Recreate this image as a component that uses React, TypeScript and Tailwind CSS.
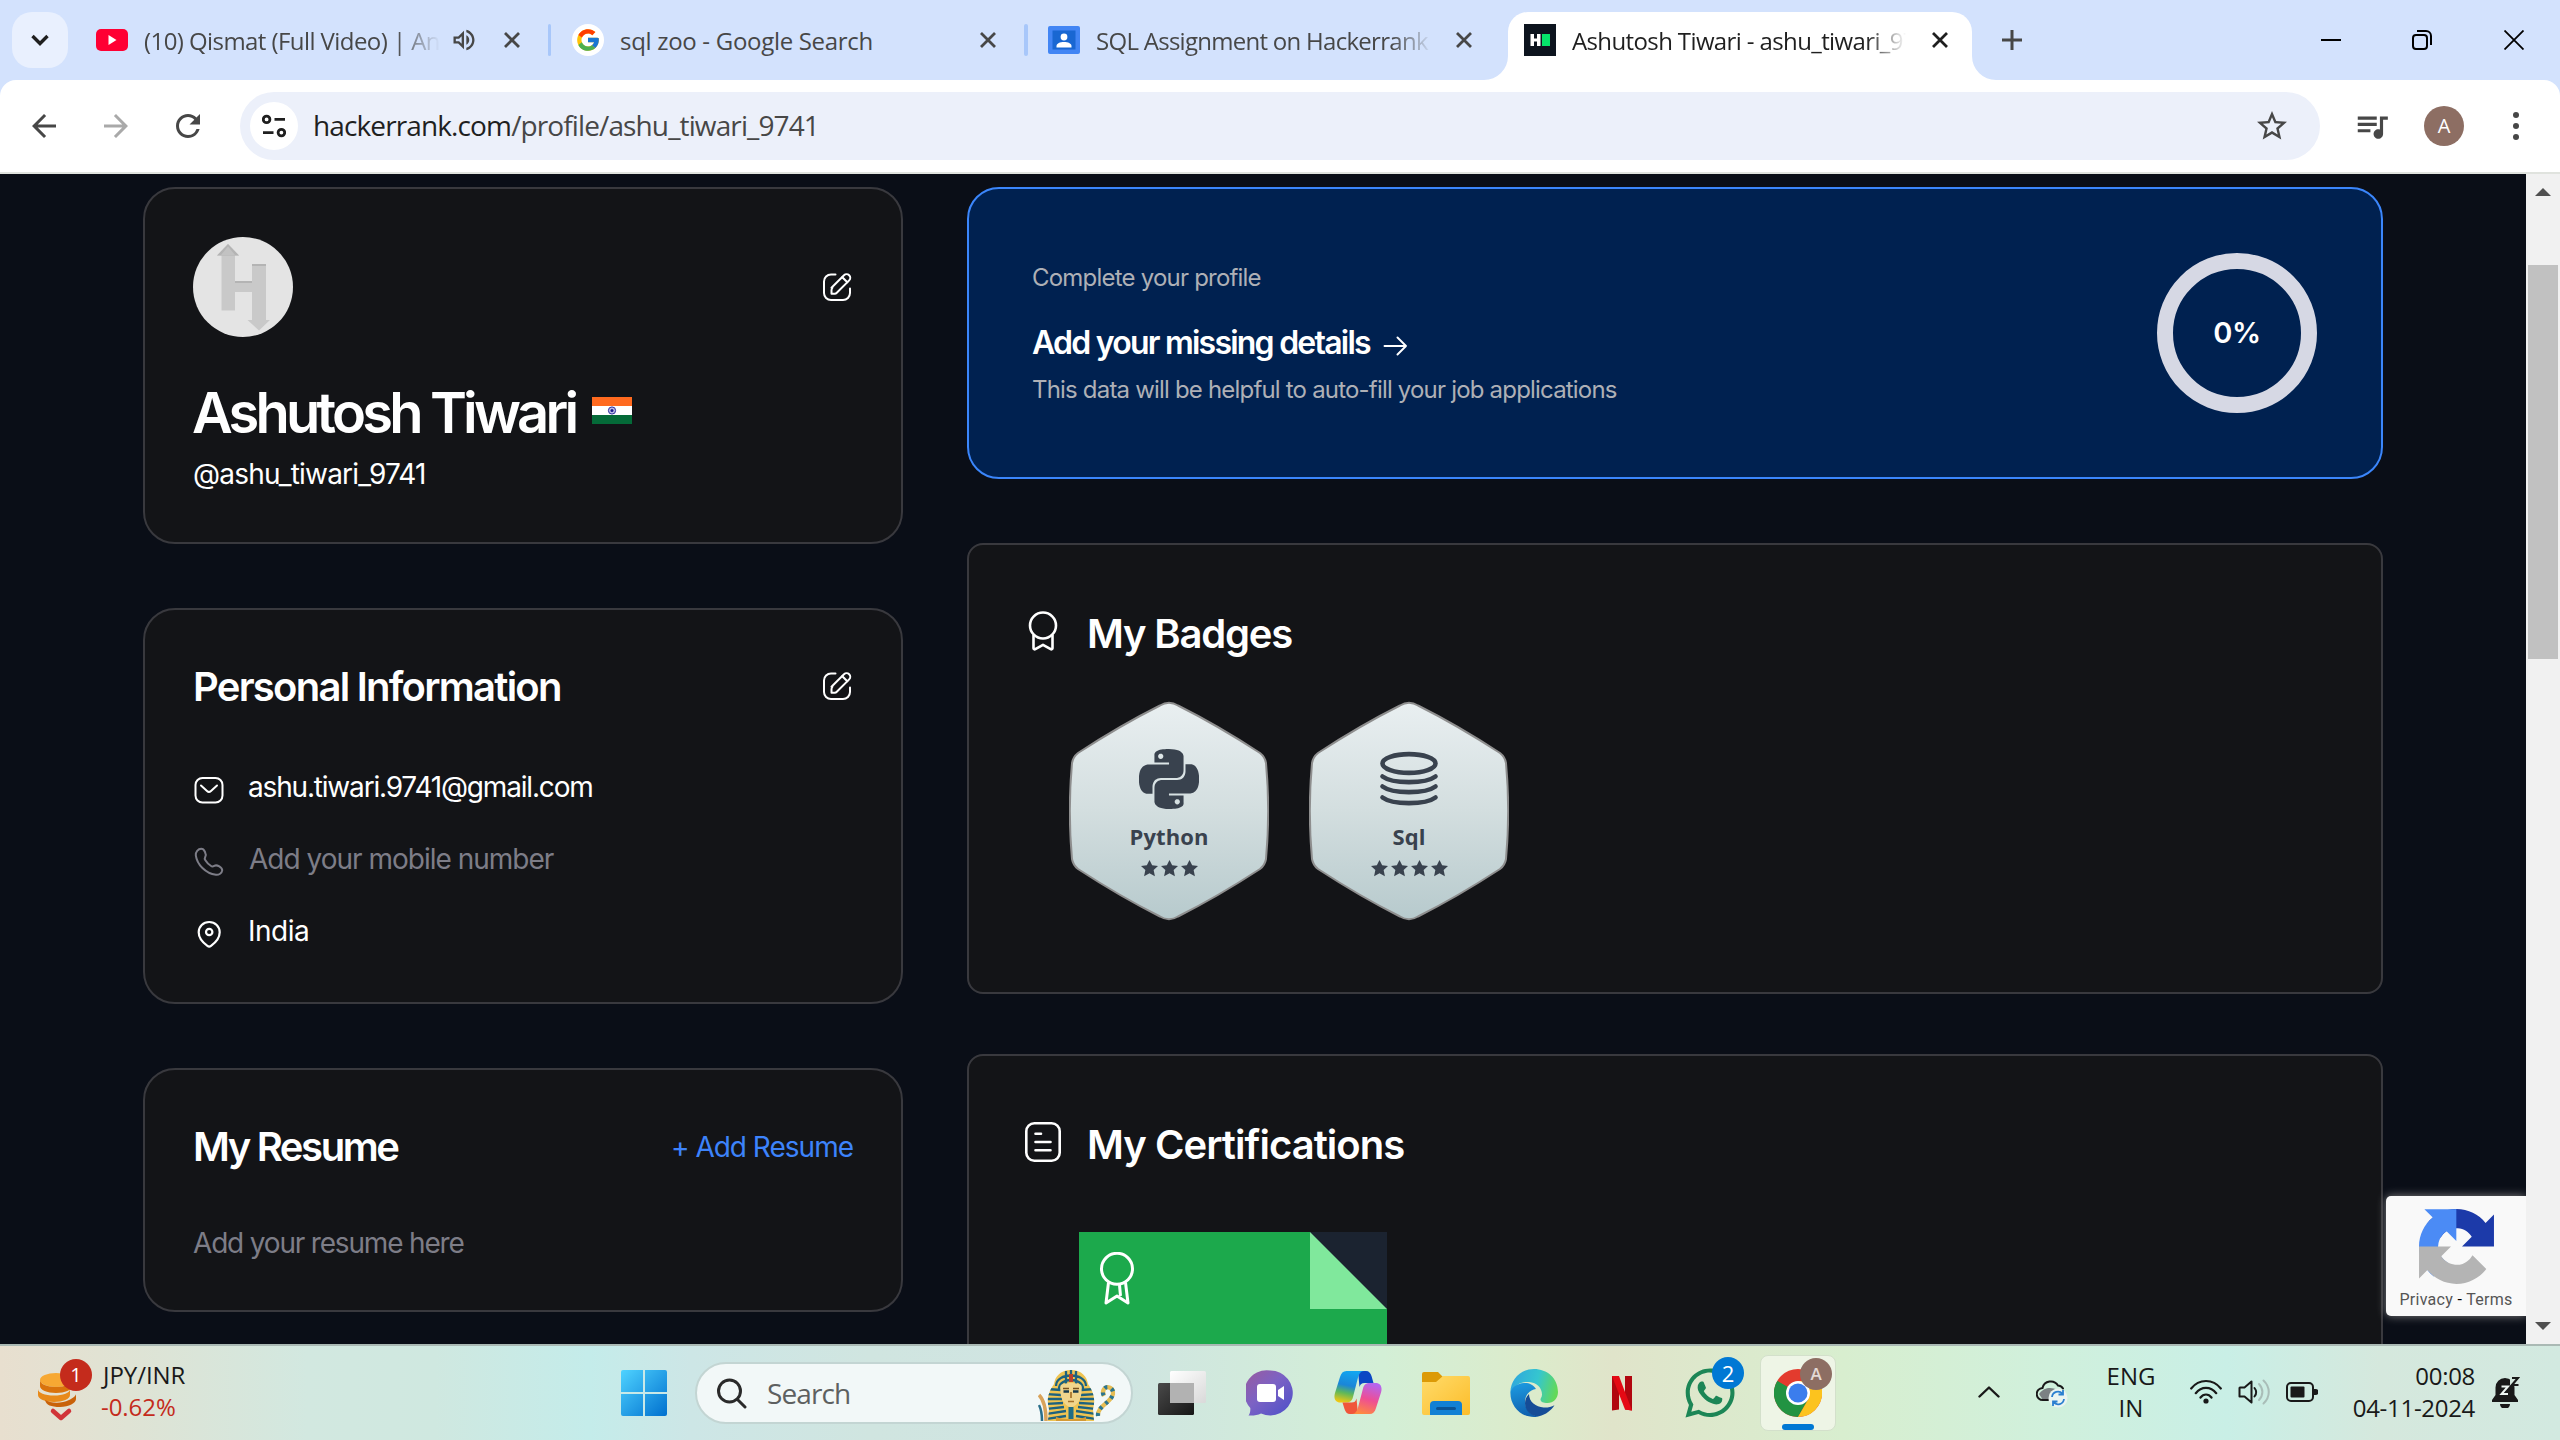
import React from "react";
import { FcGoogle } from "react-icons/fc";
import { SiPython } from "react-icons/si";
import { FaWhatsapp } from "react-icons/fa";
import { MdArrowBack, MdArrowForward, MdOutlineVolumeUp, MdQueueMusic, MdRefresh, MdStarBorder } from "react-icons/md";

/* ---------- browser chrome ---------- */

function CloseGlyph({ color = "#474747" }: { color?: string }) {
  return (
    <svg className="h-4 w-4 shrink-0" viewBox="0 0 16 16" fill="none" stroke={color} strokeWidth="2.8">
      <path d="M1 1l14 14M15 1L1 15" />
    </svg>
  );
}

function TabStrip() {
  return (
    <div className="flex h-20 items-center bg-[#d3e2fd] pr-9 pl-3 font-['Open_Sans',sans-serif] text-[24px] text-[#474747]">
      <div className="flex h-14 w-14 shrink-0 items-center justify-center rounded-[20px] bg-[#e9f0fe]">
        <svg className="h-4 w-5" viewBox="0 0 20 16" fill="none" stroke="#1f1f1f" strokeWidth="3.4">
          <path d="M2.5 4l7.5 7.5L17.500 4" />
        </svg>
      </div>

      <svg className="ml-7 h-[22px] w-8 shrink-0" viewBox="0 0 32 22">
        <rect width="32" height="22" rx="5" fill="#ff0033" />
        <path d="M12.500 6v10l8-5z" fill="#fff" />
      </svg>
      <div className="ml-4 w-[296px] shrink-0 overflow-hidden mask-r-from-85% mask-r-to-100% pt-0.5 tracking-[-0.57px] whitespace-nowrap">
        (10) Qismat (Full Video) | An
      </div>
      <MdOutlineVolumeUp className="ml-2.5 size-7 shrink-0" />
      <div className="ml-[26px]">
        <CloseGlyph />
      </div>
      <div className="ml-7 h-8 w-[3px] shrink-0 rounded bg-[#a8c7fa]" />

      <div className="ml-[21px] flex size-8 shrink-0 items-center justify-center rounded-full bg-white">
        <FcGoogle className="size-[26px]" />
      </div>
      <div className="ml-4 w-[360px] shrink-0 pt-0.5 tracking-[-0.3px] whitespace-nowrap">sql zoo - Google Search</div>
      <CloseGlyph />
      <div className="ml-7 h-8 w-1 shrink-0 rounded bg-[#a8c7fa]" />

      <svg className="ml-5 h-7 w-8 shrink-0" viewBox="0 0 32 28">
        <rect width="32" height="28" rx="2" fill="#4285f4" />
        <rect x="4.500" y="4.500" width="23" height="19" fill="#1967d2" />
        <circle cx="16" cy="11" r="3.400" fill="#fff" />
        <path d="M8.500 21.500v-1.500c0-2.500 3.500-4 7.500-4s7.500 1.500 7.500 4v1.500z" fill="#fff" />
      </svg>
      <div className="ml-4 w-[336px] shrink-0 overflow-hidden mask-r-from-88% mask-r-to-100% pt-0.5 tracking-[-0.72px] whitespace-nowrap">
        SQL Assignment on Hackerrank
      </div>
      <div className="ml-6">
        <CloseGlyph />
      </div>

      <div className="relative ml-9 flex h-[68px] w-[464px] shrink-0 items-center self-end rounded-t-[20px] bg-white pb-3 pl-4 text-[#1f1f1f]">
        <svg className="absolute bottom-0 -left-6 size-6" viewBox="0 0 24 24">
          <path d="M24 0v24H0A24 24 0 0 0 24 0z" fill="#fff" />
        </svg>
        <svg className="absolute -right-6 bottom-0 size-6" viewBox="0 0 24 24">
          <path d="M0 0v24h24A24 24 0 0 1 0 0z" fill="#fff" />
        </svg>
        <svg className="size-8 shrink-0" viewBox="0 0 32 32">
          <rect width="32" height="32" fill="#0d141e" />
          <path d="M6.500 10h3.500v4.500h3V10h3.500v12H13v-4.500h-3V22H6.500z" fill="#fff" />
          <rect x="18" y="10" width="8" height="12" fill="#05e46a" />
        </svg>
        <div className="ml-4 w-[334px] shrink-0 overflow-hidden mask-r-from-88% mask-r-to-100% pt-0.5 tracking-[-0.62px] whitespace-nowrap">
          Ashutosh Tiwari - ashu_tiwari_97
        </div>
        <div className="ml-[26px]">
          <CloseGlyph color="#1f1f1f" />
        </div>
      </div>

      <svg className="ml-[30px] size-5 shrink-0" viewBox="0 0 20 20" stroke="#474747" strokeWidth="3">
        <path d="M10 0v20M0 10h20" />
      </svg>

      <svg className="ml-auto h-5 w-5 shrink-0" viewBox="0 0 20 20" stroke="#000" strokeWidth="2">
        <path d="M0 10h20" />
      </svg>
      <svg className="ml-[71px] h-5 w-5 shrink-0" viewBox="0 0 20 20" fill="none" stroke="#000" strokeWidth="2">
        <rect x="1" y="5" width="14" height="14" rx="3" />
        <path d="M5 1h9a5 5 0 0 1 5 5v9" />
      </svg>
      <svg className="ml-[72px] h-5 w-5 shrink-0" viewBox="0 0 20 20" stroke="#000" strokeWidth="1.800">
        <path d="M.5.5l19 19M19.500.5l-19 19" />
      </svg>
    </div>
  );
}

function Toolbar() {
  return (
    <div className="bg-[#d3e2fd]">
      <div className="flex h-[94px] items-center rounded-t-[16px] border-b-2 border-[#e0e3de] bg-white pl-[26px] text-[#474747]">
        <MdArrowBack className="size-9 shrink-0" />
        <MdArrowForward className="ml-9 size-9 shrink-0 text-[#a9a9a9]" />
        <MdRefresh className="ml-9 size-9 shrink-0" />
        <div className="ml-[34px] flex h-[68px] w-[2080px] shrink-0 items-center rounded-full bg-[#ecf0fa] pr-[30px] pl-2.5">
          <div className="flex size-12 shrink-0 items-center justify-center rounded-full bg-white">
            <svg className="h-6 w-6" viewBox="0 0 24 24" fill="none" stroke="#1f1f1f" strokeWidth="2.800">
              <circle cx="4.600" cy="5.400" r="3.300" />
              <path d="M12.500 5.400H23M1 18.600h10.500" />
              <circle cx="19.400" cy="18.600" r="3.300" />
            </svg>
          </div>
          <div className="ml-[15px] pb-0.5 font-['Open_Sans',sans-serif] text-[28px] tracking-[-0.88px]">
            <span className="text-[#1f1f1f]">hackerrank.com</span>/profile/ashu_tiwari_9741
          </div>
          <MdStarBorder className="ml-auto size-9" />
        </div>
        <MdQueueMusic className="ml-[33px] size-[38px] shrink-0" />
        <div className="ml-[33px] flex size-10 shrink-0 items-center justify-center rounded-full bg-[#8d6e63] font-['Open_Sans',sans-serif] text-[20px] text-white">
          A
        </div>
        <svg className="ml-[48px] h-7 w-2 shrink-0" viewBox="0 0 8 28" fill="#474747">
          <circle cx="4" cy="3" r="3" />
          <circle cx="4" cy="14" r="3" />
          <circle cx="4" cy="25" r="3" />
        </svg>
      </div>
    </div>
  );
}

/* ---------- profile page ---------- */

function EditIcon() {
  return (
    <svg className="size-8 shrink-0" viewBox="0 0 32 32" fill="none" stroke="#fff" strokeWidth="2" strokeLinecap="round" strokeLinejoin="round">
      <path d="M14.500 3.500H10a7 7 0 0 0-7 7v11.500a7 7 0 0 0 7 7h12a7 7 0 0 0 7-7V17.500" />
      <path d="M10.500 16.800L23 4.300a3.600 3.600 0 0 1 5.200 5.100L15.800 21.800a3 3 0 0 1-2.100.9h-3.200v-3.500a3.500 3.500 0 0 1 .9-2.400z" />
      <path d="M21.300 6.200l5 5" />
    </svg>
  );
}

function MedalIcon() {
  return (
    <svg className="size-10 shrink-0" viewBox="0 0 40 40" fill="none" stroke="#fff" strokeWidth="2.600" strokeLinejoin="round">
      <circle cx="20" cy="14.500" r="13" />
      <path d="M10.500 24v13.200a1.200 1.200 0 0 0 1.800 1l7.700-4.400 7.700 4.400a1.200 1.200 0 0 0 1.800-1V24" />
    </svg>
  );
}

function DocumentIcon() {
  return (
    <svg className="size-10 shrink-0" viewBox="0 0 40 40" fill="none" stroke="#fff" strokeWidth="2.600" strokeLinecap="round">
      <rect x="3.300" y="1.300" width="33.400" height="37.400" rx="8" />
      <path d="M12.500 11.800h5.500M12.500 20h15M12.500 28.300h15" />
    </svg>
  );
}

function ProfileCard() {
  return (
    <section className="h-[357px] rounded-[32px] border-2 border-[#39393e] bg-[#131417] p-12">
      <div className="flex items-center justify-between">
        <svg className="size-[100px]" viewBox="0 0 100 100">
          <circle cx="50" cy="50" r="50" fill="#e4e4e4" />
          <path d="M35 7L46 18.500H42V44h17V27h14v56h4L66 93.500 54.500 83H59V55H42v18.500H28.500v-55H24z" fill="#c9c9c9" />
          <path d="M35 7L46 18.500H24zM59 27h14v2H59zM42 44h17v2H42z" fill="#b4b4b4" />
          <path d="M35 9.500l7 8.500H28z" fill="#c2c2c2" />
        </svg>
        <EditIcon />
      </div>
      <div className="mt-11 flex items-center">
        <h1 className="-ml-px w-[400px] text-[56px] leading-[64px] font-semibold tracking-[-3.8px] whitespace-nowrap">Ashutosh Tiwari</h1>
        <svg className="mb-1.5 h-[27px] w-10" viewBox="0 0 40 27">
          <rect width="40" height="9" fill="#ff6a1f" />
          <rect y="9" width="40" height="9" fill="#fff" />
          <rect y="18" width="40" height="9" fill="#046a38" />
          <circle cx="20" cy="13.500" r="3.600" fill="#b9b9e6" stroke="#2a2a9c" strokeWidth="1" />
          <circle cx="20" cy="13.500" r="1.500" fill="#1a1a8c" />
        </svg>
      </div>
      <p className="mt-[9px] text-[28px] leading-10 tracking-[-0.8px]">@ashu_tiwari_9741</p>
    </section>
  );
}

function PersonalInformation() {
  return (
    <section className="mt-16 h-[396px] rounded-[32px] border-2 border-[#39393e] bg-[#131417] p-12">
      <div className="flex h-14 items-center justify-between">
        <h2 className="pt-0.5 text-[40px] leading-14 font-semibold tracking-[-1.74px]">Personal Information</h2>
        <EditIcon />
      </div>
      <div className="mt-[53px] flex flex-col gap-8 text-[28px] leading-10">
        <div className="flex">
          <svg className="mt-[7px] size-8" viewBox="0 0 32 32" fill="none" stroke="#fff" strokeWidth="2" strokeLinecap="round" strokeLinejoin="round">
            <rect x="2.500" y="4" width="27" height="24.500" rx="7" />
            <path d="M8 11.500l6 5.500a3 3 0 0 0 4 0l6-5.500" />
          </svg>
          <span className="ml-[23px] tracking-[-1.18px]">ashu.tiwari.9741@gmail.com</span>
        </div>
        <div className="flex text-[#7d7d87]">
          <svg className="mt-[7px] size-8" viewBox="0 0 32 32" fill="none" stroke="currentColor" strokeWidth="2" strokeLinejoin="round">
            <path d="M8.200 2.800c1.800 0 2.900 1.200 3.700 2.900.9 1.900 1.200 3.600.4 5-.7 1.300-.8 2.200-.1 3.300 1.300 2.200 3.400 4.400 5.900 6 1 .7 2 .5 3.200-.2 1.600-.8 3.300-.4 5 .6 1.900 1.200 3.100 2.300 2.900 4.100-.3 2.500-3.200 4.700-6.300 4.300C12.600 27.300 4 18.500 2.800 9.300c-.4-3.300 2.300-6.500 5.400-6.500z" />
          </svg>
          <span className="ml-6 tracking-[-1px]">Add your mobile number</span>
        </div>
        <div className="flex">
          <svg className="mt-[7px] size-8" viewBox="0 0 32 32" fill="none" stroke="#fff" strokeWidth="2.200" strokeLinejoin="round">
            <path d="M16.200 4C10.200 4 5.700 8.500 5.700 14.300c0 5.200 3.700 10 8.700 13.600a3 3 0 0 0 3.600 0C23 24.300 26.700 19.500 26.700 14.300 26.700 8.500 22.200 4 16.200 4z" />
            <circle cx="16.200" cy="14" r="3.200" />
          </svg>
          <span className="ml-[23px] tracking-[-0.5px]">India</span>
        </div>
      </div>
    </section>
  );
}

function ResumeCard() {
  return (
    <section className="mt-16 h-[244px] rounded-[32px] border-2 border-[#39393e] bg-[#131417] p-12">
      <div className="flex h-14 items-center justify-between">
        <h2 className="pt-0.5 text-[40px] leading-14 font-semibold tracking-[-2.400px]">My Resume</h2>
        <span className="pt-0.5 text-[28px] leading-10 tracking-[-1px] text-[#3d83fb]">+ Add Resume</span>
      </div>
      <p className="mt-[49px] text-[28px] leading-10 tracking-[-1.18px] text-[#7d7d87]">Add your resume here</p>
    </section>
  );
}

function CompleteProfileCard() {
  return (
    <section className="flex h-[292px] justify-between rounded-[32px] border-2 border-[#3b86fb] bg-[#002150] px-16">
      <div className="-ml-px pt-[73px]">
        <p className="text-[24px] leading-8 tracking-[-0.79px] text-[#aeb0b6]">Complete your profile</p>
        <div className="mt-[29px] flex items-center">
          <h2 className="w-[351px] text-[32px] leading-10 font-semibold tracking-[-1.77px] whitespace-nowrap">Add your missing details</h2>
          <svg className="mt-[5px] h-5 w-6" viewBox="0 0 24 20" fill="none" stroke="#fff" strokeWidth="1.900" strokeLinecap="round" strokeLinejoin="round">
            <path d="M1.500 10H23M14.500 1.500L23 10l-8.500 8.500" />
          </svg>
        </div>
        <p className="mt-[11px] text-[24px] leading-8 tracking-[-0.81px] text-[#aeb0b6]">
          This data will be helpful to auto-fill your job applications
        </p>
      </div>
      <div className="mt-16 flex size-40 items-center justify-center rounded-full border-16 border-[#d6d8e4] text-[29px] font-semibold tracking-[-0.5px]">0%</div>
    </section>
  );
}

const HEX_PATH =
  "M91 4.500Q100-1 109 4.500C140 20 168 37 191 52Q196 56 197 62C200 95 200 125 197 158Q196 164 191 168C168 183 140 200 109 215.500Q100 221 91 215.500C60 200 32 183 9 168Q4 164 3 158C0 125 0 95 3 62Q4 56 9 52C32 37 60 20 91 4.500Z";

function Badge({ label, stars, icon }: { label: string; stars: number; icon: React.ReactNode }) {
  return (
    <div className="relative h-[220px] w-[200px]">
      <svg className="absolute inset-0 h-full w-full" viewBox="0 0 200 220">
        <defs>
          <linearGradient id={`silver-${label}`} x1="0" y1="0" x2="0" y2="1">
            <stop offset="0" stopColor="#e9eff1" />
            <stop offset="0.5" stopColor="#d3dedf" />
            <stop offset="1" stopColor="#b7cacd" />
          </linearGradient>
        </defs>
        <path d={HEX_PATH} fill={`url(#silver-${label})`} stroke="#8e8e8e" strokeWidth="2" />
      </svg>
      <div className="relative flex flex-col items-center pt-12 text-[#39424e]">
        {icon}
        <span className="mt-[13px] font-['Open_Sans',sans-serif] text-[22px] leading-7 font-bold tracking-[0.1px]">{label}</span>
        <div className="mt-2.5 flex gap-[3px]">
          {Array.from({ length: stars }, (_, i) => (
            <svg key={i} className="size-[17px]" viewBox="0 0 16 16" fill="#39424e">
              <path d="M8 0l2.500 5 5.500.6-4.100 3.800 1.200 5.900L8 12.500l-5.100 2.800 1.200-5.900L0 5.600 5.500 5z" />
            </svg>
          ))}
        </div>
      </div>
    </div>
  );
}

function BadgesCard() {
  return (
    <section className="mt-16 h-[451px] rounded-[16px] border-2 border-[#39393e] bg-[#131417] pt-[60px] pl-[54px]">
      <div className="flex h-14">
        <div className="mt-1.5">
          <MedalIcon />
        </div>
        <h2 className="ml-6 pt-px text-[40px] leading-14 font-semibold tracking-[-1.2px]">My Badges</h2>
      </div>
      <div className="mt-10 ml-[46px] flex gap-10">
        <Badge label="Python" stars={3} icon={<SiPython className="size-[60px]" />} />
        <Badge
          label="Sql"
          stars={4}
          icon={
            <svg className="size-[60px]" viewBox="0 0 60 60" fill="none" stroke="#39424e" strokeWidth="4.600" strokeLinecap="round">
              <ellipse cx="30" cy="14.500" rx="26.500" ry="9.400" />
              <path d="M3.500 27.500c10 7.500 43 7.500 53 0M3.500 37.500c10 7.500 43 7.500 53 0M3.500 48.500c10 7.500 43 7.500 53 0" />
            </svg>
          }
        />
      </div>
    </section>
  );
}

function CertificationsCard() {
  return (
    <section className="mt-[60px] h-[500px] shrink-0 rounded-[16px] border-2 border-[#39393e] bg-[#131417] pt-[60px] pl-[54px]">
      <div className="flex h-14">
        <div className="mt-1.5">
          <DocumentIcon />
        </div>
        <h2 className="ml-6 pt-px text-[40px] leading-14 font-semibold tracking-[-0.95px]">My Certifications</h2>
      </div>
      <div className="mt-[60px] ml-14 flex h-[200px] w-[308px] justify-between bg-[#1ca94c] pl-5">
        <svg className="mt-5 h-[54px] w-9" viewBox="0 0 36 54" fill="none" stroke="#fff" strokeWidth="3">
          <circle cx="18" cy="16.800" r="15.500" />
          <path d="M9.500 30.500L7 51l11-7 11 7-2.500-20.500M20.500 33l1 11" strokeLinejoin="round" />
        </svg>
        <svg className="size-[77px]" viewBox="0 0 77 77">
          <rect width="77" height="77" fill="#1b2330" />
          <path d="M0 0v77h77z" fill="#80e89c" />
        </svg>
      </div>
    </section>
  );
}

function RecaptchaBadge() {
  return (
    <div className="absolute top-[1022px] right-0 flex h-[120px] w-[140px] flex-col items-center rounded-l-[5px] bg-[#f9f9f9] pt-[13px] shadow-[0_0_10px_#808080]">
      <svg className="size-[75px]" viewBox="0 0 64 64">
        <path
          fill="#1c3aa9"
          d="M64 31.955l-.033-1.370V4.687l-7.160 7.160C50.948 4.674 42.033.093 32.050.093c-10.400 0-19.622 4.960-25.458 12.640l11.736 11.860a15.550 15.550 0 0 1 4.754-5.334c2.050-1.600 4.952-2.906 8.968-2.906.485 0 .860.057 1.135.163 4.976.393 9.288 3.140 11.828 7.124l-8.307 8.307L64 31.953"
        />
        <path
          fill="#4b8bf5"
          d="M31.862.094l-1.370.033H4.594l7.160 7.160C4.580 13.147 0 22.060 0 32.046c0 10.400 4.960 19.622 12.640 25.458L24.500 45.768a15.550 15.550 0 0 1-5.334-4.754c-1.600-2.050-2.906-4.952-2.906-8.968 0-.485.057-.860.163-1.135.393-4.976 3.140-9.288 7.124-11.828l8.307 8.307L31.860.095"
        />
        <path
          fill="#b4b4b4"
          d="M.001 32.045l.033 1.370v25.898l7.160-7.160c5.860 7.173 14.774 11.754 24.760 11.754 10.400 0 19.622-4.960 25.458-12.640l-11.736-11.860a15.550 15.550 0 0 1-4.754 5.334c-2.050 1.600-4.952 2.906-8.968 2.906-.485 0-.860-.057-1.135-.163-4.976-.393-9.288-3.140-11.828-7.124l8.307-8.307c-10.522.040-22.400.066-27.295-.005"
        />
      </svg>
      <p className="mt-1.5 font-['Roboto',sans-serif] text-[16px] leading-5 tracking-[0.3px] whitespace-nowrap text-[#555]">
        Privacy <span className="text-black">-</span> Terms
      </p>
    </div>
  );
}

function Scrollbar() {
  return (
    <div className="flex h-full w-[34px] shrink-0 flex-col items-center bg-[#f1f1f1]">
      <svg className="mt-3.5 h-2 w-4 shrink-0" viewBox="0 0 16 8" fill="#505050">
        <path d="M8 0l8 8H0z" />
      </svg>
      <div className="mt-[69px] h-[394px] w-[30px] shrink-0 bg-[#c1c1c1]" />
      <svg className="mt-auto mb-3.5 h-2 w-4 shrink-0" viewBox="0 0 16 8" fill="#505050">
        <path d="M0 0h16L8 8z" />
      </svg>
    </div>
  );
}

function ProfilePage() {
  return (
    <div className="flex h-[1170px] overflow-hidden">
      <main className="relative flex w-[2526px] shrink-0 gap-16 overflow-hidden bg-[#0a0e17] pt-[13px] pl-[143px] font-['Inter',sans-serif] text-white">
        <div className="w-[760px] shrink-0">
          <ProfileCard />
          <PersonalInformation />
          <ResumeCard />
        </div>
        <div className="w-[1416px] shrink-0">
          <CompleteProfileCard />
          <BadgesCard />
          <CertificationsCard />
        </div>
        <RecaptchaBadge />
      </main>
      <Scrollbar />
    </div>
  );
}

/* ---------- taskbar ---------- */

function StocksWidget() {
  return (
    <div className="flex w-[583px] shrink-0 items-center">
      <div className="relative h-14 w-[52px]">
        <svg className="absolute top-1.5 left-0 h-[50px] w-[42px]" viewBox="0 0 42 50">
          <ellipse cx="18" cy="9" rx="16" ry="7" fill="#f7a833" />
          <path d="M2 9v6c0 4 7 7 16 7s16-3 16-7V9c0 4-7 7-16 7S2 13 2 9z" fill="#d9730d" />
          <path d="M0 18v6c0 4 7 7 16 7s16-3 16-7v-6c0 4-7 6.500-16 6.500S0 22 0 18z" fill="#e88a1a" />
          <path d="M7 29c5 3 16 4 24 0 3-1.500 7-4 7-6v5c0 4-7 8-16 8S8 34 7 29z" fill="#c9620a" />
          <path d="M15 40l8 7 8-7" fill="none" stroke="#d13438" strokeWidth="4.500" strokeLinecap="round" strokeLinejoin="round" />
        </svg>
        <div className="absolute -top-1.5 left-[22px] flex size-8 items-center justify-center rounded-full bg-[#c42b1c] text-[20px] text-white">1</div>
      </div>
      <div className="ml-[11px] pb-1 text-[24px] leading-8 tracking-[-0.05px]">
        <p className="pl-0.5 text-[#191919]">JPY/INR</p>
        <p className="text-[#c42b1c]">-0.62%</p>
      </div>
    </div>
  );
}

function SearchBox() {
  return (
    <div className="ml-[28px] flex h-[62px] w-[438px] shrink-0 items-center overflow-hidden rounded-full border-2 border-[#c3d5d3] bg-[#f2f8f8] pr-[13px] pl-[19px]">
      <svg className="size-[31px]" viewBox="0 0 31 31" fill="none" stroke="#2a2a2a" strokeWidth="3" strokeLinecap="round">
        <circle cx="13.500" cy="13" r="11" />
        <path d="M21.500 21.500l7.500 7.500" />
      </svg>
      <span className="ml-5 text-[28px] tracking-[-0.9px] text-[#5d6060]">Search</span>
      <svg className="mt-1 ml-auto h-[52px] w-20" viewBox="0 0 80 52">
        <defs>
          <clipPath id="headcloth">
            <path d="M33 1C22 1 17 8 16 15 11 22 8 30 11 40l-1 12h46l-1-12c3-10 0-18-5-25C49 8 44 1 33 1z" />
          </clipPath>
        </defs>
        <path d="M1 26c5 5 7 14 7 26" fill="none" stroke="#d9a35a" strokeWidth="3.500" />
        <path d="M1 36c2 4 3 10 3 16" fill="none" stroke="#2a6f8a" strokeWidth="2.500" />
        <g clipPath="url(#headcloth)">
          <rect x="6" width="54" height="52" fill="#efc452" />
          <g stroke="#1d627f" strokeWidth="2.300" fill="none">
            <path d="M18 17C18 3 48 3 48 17M21 20C21 8 45 8 45 20M28 2v14M38 2v14M33 1v6" />
            <path d="M9 20l14 1M8 25l15 1M7 30l17 0M7 35l18-1M7 40l19-2M8 45l20-3M8 50l20-3" />
            <path d="M57 20l-14 1M58 25l-15 1M59 30l-17 0M59 35l-18-1M59 40l-19-2M58 45l-20-3M58 50l-20-3" />
          </g>
        </g>
        <path d="M22.500 17c0-4 21-4 21 0 1 10-2 19-10.500 21.500C24.500 36 21.500 27 22.500 17z" fill="#f1d58c" />
        <path d="M25 19.500h6M35 19.500h6" stroke="#7a5320" strokeWidth="1.400" />
        <path d="M25.500 22.500h5.500M35 22.500h5.500" stroke="#173a4e" strokeWidth="2.400" />
        <path d="M33 23v6M30 32.500h6" stroke="#a8722a" strokeWidth="1.700" />
        <path d="M30.500 38h5v12h-5z" fill="#1f6d86" />
        <path d="M31 5h4v8h-4z" fill="#b8402c" />
        <path d="M18 48c8 3 22 3 30 0v4H18z" fill="#d59a34" />
        <path d="M60 47c-1-10 13-13 15-22 1-6-6-9-9-5-2 3-1 5 0 7" fill="none" stroke="#e6bd54" strokeWidth="4.200" />
        <path d="M60 47c-1-10 13-13 15-22 1-6-6-9-9-5-2 3-1 5 0 7" fill="none" stroke="#2a7590" strokeWidth="4.200" strokeDasharray="3 4.500" />
      </svg>
    </div>
  );
}

function StartIcon() {
  return (
    <svg className="size-[46px] shrink-0" viewBox="0 0 46 46">
      <defs>
        <linearGradient id="start" x1="0" y1="0" x2="1" y2="1" gradientUnits="objectBoundingBox">
          <stop offset="0" stopColor="#4fd3ff" />
          <stop offset="1" stopColor="#0070cf" />
        </linearGradient>
      </defs>
      <path d="M2 0h20v22H0V2a2 2 0 0 1 2-2zM24 0h20a2 2 0 0 1 2 2v20H24zM0 24h22v22H2a2 2 0 0 1-2-2zM24 24h22v20a2 2 0 0 1-2 2H24z" fill="url(#start)" />
    </svg>
  );
}

function TaskViewIcon() {
  return (
    <svg className="size-12 shrink-0" viewBox="0 0 48 48">
      <defs>
        <linearGradient id="tv-dark" x1="0" y1="0" x2="1" y2="1">
          <stop offset="0" stopColor="#4a4a4a" />
          <stop offset="1" stopColor="#161616" />
        </linearGradient>
        <linearGradient id="tv-light" x1="0" y1="0" x2="1" y2="1">
          <stop offset="0" stopColor="#ffffff" />
          <stop offset="1" stopColor="#d9d9d9" />
        </linearGradient>
      </defs>
      <rect x="0" y="14" width="36" height="32" rx="1.500" fill="url(#tv-dark)" />
      <rect x="12" y="2" width="36" height="32" rx="1.500" fill="url(#tv-light)" />
      <rect x="12" y="14" width="24" height="20" fill="#b2b2b2" />
    </svg>
  );
}

function ChatIcon() {
  return (
    <svg className="size-12 shrink-0" viewBox="0 0 48 48">
      <defs>
        <linearGradient id="chat" x1="0" y1="0" x2="1" y2="1">
          <stop offset="0" stopColor="#9a5b9e" />
          <stop offset="0.45" stopColor="#7c62c4" />
          <stop offset="1" stopColor="#4b4fc9" />
        </linearGradient>
      </defs>
      <path d="M24.500 1.500a22.500 22.500 0 1 1-9.500 43c-3.500 1.700-8 2.400-12.500 2 1.500-2 2-4.500 1.800-7.500A22.500 22.500 0 0 1 24.500 1.500z" fill="url(#chat)" />
      <rect x="11" y="15" width="19" height="18" rx="3" fill="#fff" />
      <path d="M32 21l6-4v14l-6-4z" fill="#fff" />
    </svg>
  );
}

function CopilotIcon() {
  return (
    <svg className="size-12 shrink-0" viewBox="0 0 48 48">
      <defs>
        <linearGradient id="cp-a" x1="0.5" y1="0" x2="0.3" y2="1">
          <stop offset="0" stopColor="#12a5f0" />
          <stop offset="0.45" stopColor="#1b86d8" />
          <stop offset="0.7" stopColor="#5fb85a" />
          <stop offset="1" stopColor="#f2c811" />
        </linearGradient>
        <linearGradient id="cp-b" x1="0.6" y1="0" x2="0.3" y2="1">
          <stop offset="0" stopColor="#b565ee" />
          <stop offset="0.5" stopColor="#ee4e94" />
          <stop offset="1" stopColor="#ff8b3d" />
        </linearGradient>
      </defs>
      <path d="M24 2h8c3 0 4.500 2 5.500 5l2 7h-9c-3 0-4 1-5 4z" fill="#0b47c4" />
      <path d="M12.500 2H30c-3.500 0-5 3-6 6.500l-5 19.500C18 32 16 33.500 12 33.500H6.500C1 33.500-.5 29 1 24L6 8C7.200 4 9 2 12.500 2z" fill="url(#cp-a)" />
      <path d="M24 45h-8c-3 0-4.500-2-5.500-5l-2-6.500h9c3 0 4-1 5-4z" fill="#f0553a" />
      <path d="M35.500 45H18c3.500 0 5-3 6-6.500L29 19.500c1-4 3-5.500 7-5.500h5.500C47 14 48.500 18.500 47 23.500L42 39c-1.200 4-3 6-6.500 6z" fill="url(#cp-b)" />
    </svg>
  );
}

function FolderIcon() {
  return (
    <svg className="size-12 shrink-0" viewBox="0 0 48 48">
      <defs>
        <linearGradient id="folder" x1="0" y1="0" x2="1" y2="1">
          <stop offset="0" stopColor="#ffdb6a" />
          <stop offset="1" stopColor="#fcbd2a" />
        </linearGradient>
      </defs>
      <path d="M2 3h14l5 5h-1v8H0V5a2 2 0 0 1 2-2z" fill="#dc9a07" />
      <path d="M0 13h14l7-6h25a2 2 0 0 1 2 2v35a2 2 0 0 1-2 2H2a2 2 0 0 1-2-2z" fill="url(#folder)" />
      <path d="M8 46V36a4 4 0 0 1 4-4h24a4 4 0 0 1 4 4v10z" fill="#1280d4" />
      <rect x="14" y="38" width="20" height="3" rx="1.500" fill="#0b5394" />
    </svg>
  );
}

function EdgeIcon() {
  return (
    <svg className="size-12 shrink-0" viewBox="0 0 48 48">
      <defs>
        <linearGradient id="edge-top" x1="0" y1="0.3" x2="1" y2="0.5">
          <stop offset="0" stopColor="#2fa7dd" />
          <stop offset="0.55" stopColor="#35c6cf" />
          <stop offset="1" stopColor="#63d957" />
        </linearGradient>
        <linearGradient id="edge-left" x1="0.3" y1="0" x2="0.5" y2="1">
          <stop offset="0" stopColor="#1d9ae0" />
          <stop offset="1" stopColor="#0f5fae" />
        </linearGradient>
      </defs>
      <path d="M24 0C10 0 .8 11 .4 23 5 15 13 12.500 19 13c8 .5 13 6 13 12.500 0 2.500-1.500 3.500-1.500 5 0 2.500 3 3.500 7 3.500 6 0 10.500-4.500 10.500-11C48 9 37 0 24 0z" fill="url(#edge-top)" />
      <path d="M.4 23C0 37 10.500 48 24 48c2 0 3.500-.3 5-.8C21 47 15 40 15 33c0-7 4.500-12 11-13-3-5-8-6.500-12-6-7 .6-12 4-13.600 9z" fill="url(#edge-left)" />
      <path d="M19 25c-3 3-4 6-4 9.500C15 42 22 48 29 47.200c7-1.700 12-5.700 15.500-11-3.500 1.800-7 2.600-11 2.300C26 38 19 33 19 25z" fill="#154c97" />
    </svg>
  );
}

function NetflixIcon() {
  return (
    <svg className="size-12 shrink-0" viewBox="0 0 48 48">
      <path d="M14 7h7v33.500l-7 1z" fill="#b1060f" />
      <path d="M27 7h7v34.500l-7-1z" fill="#b1060f" />
      <path d="M14 7h7l13 34.500-7-1z" fill="#e50914" />
    </svg>
  );
}

function ChromeIcon() {
  return (
    <svg className="size-12 shrink-0" viewBox="0 0 48 48">
      <circle cx="24" cy="24" r="24" fill="#e33b2e" />
      <path d="M3.200 12A24 24 0 0 0 24 48l10.400-18z" fill="#229342" />
      <path d="M3.200 12L13.600 30 24 24z" fill="#229342" />
      <path d="M24 48a24 24 0 0 0 20.800-36H24l10.400 18z" fill="#fcc31e" />
      <circle cx="24" cy="24" r="12" fill="#fff" />
      <circle cx="24" cy="24" r="9.500" fill="#3b7ded" />
    </svg>
  );
}

function Tray() {
  return (
    <div className="ml-[156px] flex shrink-0 items-center pb-0.5 text-[#191919]">
      <svg className="h-3 w-[22px]" viewBox="0 0 22 12" fill="none" stroke="#191919" strokeWidth="2.400" strokeLinecap="round" strokeLinejoin="round">
        <path d="M1.500 10.500L11 1.500l9.500 9" />
      </svg>
      <svg className="mt-1 ml-9 h-7 w-8" viewBox="0 0 32 28">
        <path d="M3 14C8 7 16 7 21 10l-9 10H7z" fill="#7b8183" />
        <path d="M12 20H7A6 6 0 0 1 6.500 8 8.500 8.500 0 0 1 22 5.500a6 6 0 0 1 5 3" fill="none" stroke="#191919" strokeWidth="2" strokeLinecap="round" />
        <circle cx="22" cy="18" r="9.500" fill="#eaf4f1" />
        <path d="M16 17a6 6 0 0 1 10.500-3.200M28 19a6 6 0 0 1-10.500 3.200M27 10v4.500h-4.500M17 26v-4.500h4.500" fill="none" stroke="#2b7fd0" strokeWidth="1.800" />
      </svg>
      <div className="ml-[38px] w-[50px] text-center text-[24px] leading-8">
        <p>ENG</p>
        <p>IN</p>
      </div>
      <svg className="ml-[34px] h-[26px] w-8" viewBox="0 0 32 26" fill="none" stroke="#191919" strokeWidth="2.200" strokeLinecap="round">
        <path d="M1.200 9.500C9-.5 23-.5 30.800 9.500M5.800 14.200c5.500-7 14.900-7 20.400 0M10.500 18.500c3-4 8-4 11 0" />
        <circle cx="16" cy="22" r="2.600" fill="#191919" stroke="none" />
      </svg>
      <svg className="ml-4 h-7 w-8" viewBox="0 0 32 28" fill="none" stroke="#191919" strokeWidth="2" strokeLinecap="round" strokeLinejoin="round">
        <path d="M1.500 10v8.500h5l7 6V3.500l-7 6H2zM16.500 10c2 2.500 2 6 0 8.500" />
        <path d="M21 6c4.500 4.800 4.500 11.200 0 16M25.500 2.500c7 6.500 7 16.500 0 23" stroke="#a9bdb8" />
      </svg>
      <svg className="ml-4 h-5 w-8" viewBox="0 0 32 20">
        <rect x="1" y="1" width="26" height="18" rx="4" fill="none" stroke="#191919" strokeWidth="2" />
        <rect x="4.500" y="4.500" width="14" height="11" rx="1" fill="#191919" />
        <path d="M28 7h1.500a2.500 2.500 0 0 1 0 6H28z" fill="#191919" />
      </svg>
      <div className="ml-[27px] w-[130px] text-right text-[24px] leading-8 tracking-[-0.3px]">
        <p>00:08</p>
        <p>04-11-2024</p>
      </div>
      <svg className="ml-[17px] h-8 w-7" viewBox="0 0 28 32">
        <path d="M13 2a9.500 9.500 0 0 0-9.500 9.500V19L0 24v2h26v-2l-3.500-5v-7.500A9.500 9.500 0 0 0 13 2zM8 28h10a5 5 0 0 1-10 0z" fill="#191919" />
        <path d="M9.500 10.500h6.500l-6.500 7.500H16" fill="none" stroke="#eef6f2" strokeWidth="2" />
        <path d="M18 0h10v10H18z" fill="#d6e8df" />
        <path d="M20 2h6l-6 7h6.500" fill="none" stroke="#191919" strokeWidth="2.200" />
      </svg>
    </div>
  );
}

function Taskbar() {
  return (
    <div className="flex h-24 items-center overflow-hidden border-t-2 border-[#aab9b4] bg-[linear-gradient(90deg,#e8dfcf_0%,#dfe3d4_5%,#d2e8e0_12%,#cfe8e0_17%,#c4ecea_23%,#cde6e6_27%,#d0e5e0_34%,#cfe4e2_43%,#d3efd6_54%,#dcebcb_60%,#e0e4ca_63%,#d8eecf_72%,#d0f0dc_80%,#c9efe6_87%,#d5e8dd_93%,#d2e9e0_100%)] pl-[38px] font-['Open_Sans',sans-serif]">
      <StocksWidget />
      <StartIcon />
      <SearchBox />
      <div className="ml-[25px] flex items-center gap-10">
        <TaskViewIcon />
        <ChatIcon />
        <CopilotIcon />
        <FolderIcon />
        <EdgeIcon />
        <NetflixIcon />
        <div className="relative size-12">
          <FaWhatsapp className="-mt-1 -ml-1 size-14 text-[#1c8656]" />
          <div className="absolute -top-3 -right-2.5 flex size-8 items-center justify-center rounded-full bg-[#0078d4] text-[22px] text-white">2</div>
        </div>
        <div className="relative -mx-3.5 flex h-19 w-19 items-center justify-center rounded-lg border border-[#d3e0cb] bg-[#eef5e6]">
          <ChromeIcon />
          <div className="absolute top-0.5 right-[3px] flex size-8 items-center justify-center rounded-full bg-[#8d6e63] text-[17px] font-semibold text-[#e3d9d5]">A</div>
          <div className="absolute bottom-0 h-1.5 w-8 rounded-full bg-[#0078d4]" />
        </div>
      </div>
      <Tray />
    </div>
  );
}

export default function App() {
  return (
    <div className="flex h-[1440px] w-[2560px] flex-col overflow-hidden bg-white">
      <TabStrip />
      <Toolbar />
      <ProfilePage />
      <Taskbar />
    </div>
  );
}
